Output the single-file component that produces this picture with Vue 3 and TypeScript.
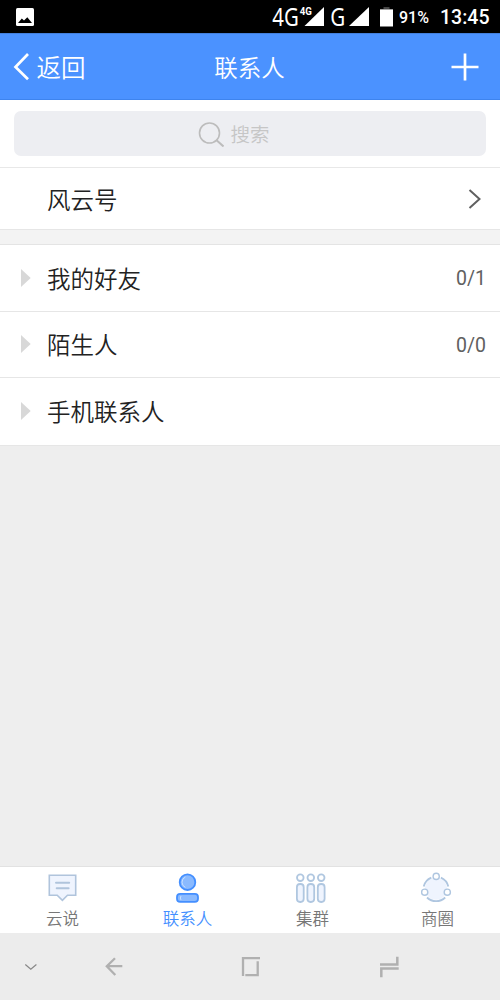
<script setup lang="ts">
interface Group { name: string; count: string; size: string }
interface Tab { id: string; label: string; active?: boolean }

const groups: Group[] = [
  { name: '我的好友', count: '0/1', size: 'mid' },
  { name: '陌生人', count: '0/0', size: 'short' },
  { name: '手机联系人', count: '', size: 'tall' },
]
const tabs: Tab[] = [
  { id: 'chat', label: '云说' },
  { id: 'contacts', label: '联系人', active: true },
  { id: 'cluster', label: '集群' },
  { id: 'circle', label: '商圈' },
]
</script>

<template>
  <div class="phone">
    <div class="status">
      <svg class="photo" width="18" height="18" viewBox="0 0 18 18">
        <rect width="18" height="18" rx="1.5" fill="#fff" />
        <path d="M2 15 L5.8 10.5 L8 12.5 L11.3 9.3 L16 15 Z" fill="#000" />
      </svg>
      <svg class="signals" width="128" height="33" viewBox="270 0 128 33" fill="#fff">
        <text transform="translate(272.3 26) scale(.815 1)" font-size="25" class="net">4G</text>
        <path d="M324 7 V26 H304.5 Z" />
        <text transform="translate(299.7 15) scale(.88 1)" font-size="11" class="net-small">4G</text>
        <text transform="translate(330.3 26) scale(.824 1)" font-size="25" class="net">G</text>
        <path d="M369 7 V26 H349 Z" />
        <path d="M383.5 7 H389.5 V9 H393 V10.5 H380 V9 H383.5 Z" fill="#444" />
        <rect x="380" y="9.5" width="13" height="17" />
      </svg>
      <span class="battery">91%</span>
      <span class="clock">13:45</span>
    </div>

    <header class="header">
      <div class="back">
        <svg width="17" height="30" viewBox="13 52 17 30"><path d="M28 54 L15.5 67 L28 79.3" fill="none" stroke="#fff" stroke-width="2.7" /></svg>
        <span>返回</span>
      </div>
      <h1>联系人</h1>
      <svg class="plus" width="28" height="28" viewBox="0 0 28 28"><path d="M14 .5 V27.5 M.5 14 H27.5" stroke="#fff" stroke-width="2.7" /></svg>
    </header>

    <div class="search-wrap">
      <div class="search">
        <svg width="26" height="26" viewBox="198 120 26 26" fill="none" stroke="#bcbcbc" stroke-width="1.6">
          <circle cx="209.5" cy="132" r="10" /><path d="M216.3 139 L223.5 145.5" stroke-width="2" />
        </svg>
        <span>搜索</span>
      </div>
    </div>

    <div class="row official">
      <span class="name">风云号</span>
      <svg width="14" height="20" viewBox="468 189 14 20"><path d="M469.5 190 L479.5 199 L469.5 208" fill="none" stroke="#606060" stroke-width="2" /></svg>
    </div>
    <div class="band"></div>
    <div v-for="g in groups" :key="g.name" class="row group" :class="g.size">
      <svg class="tri" width="10" height="18" viewBox="0 0 10 18"><path d="M0 0 L9.7 9 L0 18 Z" fill="#d8d8d8" /></svg>
      <span class="name">{{ g.name }}</span>
      <span class="count">{{ g.count }}</span>
    </div>
    <div class="empty"></div>

    <nav class="tabs">
      <div v-for="t in tabs" :key="t.id" class="tab" :class="{ active: t.active }">
        <svg v-if="t.id === 'chat'" width="33" height="32" viewBox="46 872 33 32" fill="#eff4fe" stroke="#b0c4dc" stroke-width="1.6">
          <path d="M49.3 875.2 H75.7 V895.3 H67.5 L62.4 900.4 L57.2 895.3 H49.3 Z" />
          <path d="M56 882.8 H69.2 M56.7 888.3 H68.6" stroke-width="2" stroke-linecap="round" />
        </svg>
        <svg v-else-if="t.id === 'contacts'" width="33" height="32" viewBox="171 872 33 32" fill="#8abaff" stroke="#448fff" stroke-width="1.8">
          <circle cx="187.5" cy="882.2" r="7.8" />
          <rect x="177" y="893.9" width="21" height="8" rx="3.2" />
          <path d="M185.4 877 A5.7 5.7 0 0 0 185.4 887.4 M181 896 Q179.6 898 181 900" fill="none" stroke="#c8e0ff" stroke-width="1" />
        </svg>
        <svg v-else-if="t.id === 'cluster'" width="33" height="32" viewBox="296 872 33 32" fill="#eff4fe" stroke="#b0c7e0" stroke-width="1.8">
          <template v-for="x in [300.3, 310.8, 321.2]" :key="x">
            <circle :cx="x" cy="877.7" r="3.3" fill="#fff" />
            <rect :x="x - 3.4" y="884" width="6.8" height="18" rx="3.2" />
          </template>
        </svg>
        <svg v-else width="33" height="32" viewBox="421 872 33 32" fill="none" stroke="#afc6e0" stroke-width="1.8">
          <circle cx="436" cy="888.8" r="11" fill="#eff4fe" stroke="none" />
          <path d="M423.7 886.5 A13 13 0 0 1 431.3 877.6 M440.9 877.6 A13 13 0 0 1 448.3 886.5 M427 897.5 A13 13 0 0 0 445.2 897.5" />
          <g fill="#fff" stroke-width="1.4"><circle cx="436.2" cy="876.4" r="3.1" /><circle cx="424.7" cy="892.2" r="3.1" /><circle cx="447.3" cy="892.2" r="3.1" /></g>
        </svg>
        <span>{{ t.label }}</span>
      </div>
    </nav>

    <div class="system">
      <svg width="500" height="67" viewBox="0 933 500 67" fill="none" stroke="#b0b0b0" stroke-width="2.3">
        <path d="M25.3 964.5 L30.8 969.3 L36.4 964.5" stroke="#888" stroke-width="1.2" />
        <path d="M122.3 966.2 H107 M115 958.3 L106.8 966.3 L115.3 975" />
        <path d="M260 958.2 H243 V976 M245.3 975.2 H257.7 V961.3" />
        <path d="M397.3 956.8 V964.5 H380 M398.7 968.6 H381.3 V977.2" stroke-width="2.5" />
      </svg>
    </div>
  </div>
</template>

<style>
body { margin: 0; }
</style>

<style scoped>
.phone {
  width: 500px; height: 1000px; overflow: hidden;
  display: flex; flex-direction: column; background: #eee;
  font-family: "Noto Sans CJK SC DemiLight", "Noto Sans CJK SC", sans-serif; font-weight: 350; color: #222;
}
.phone > * { box-sizing: border-box; flex: none; }
svg { display: block; flex: none; }
.status { height: 33px; background: #000; color: #fff; display: flex; align-items: center; padding-left: 16px; font-family: Roboto, sans-serif; }
.signals { margin-left: 236px; }
.net { font-family: "Noto Sans", sans-serif; font-weight: 400; }
.net-small { font-family: Roboto, sans-serif; font-weight: 700; }
.battery { width: 42px; padding: 2px 0 0 1px; box-sizing: border-box; font-size: 16px; font-weight: 500; white-space: nowrap; }
.clock { padding-top: 1px; font-size: 19.5px; font-weight: 500; }
.header { height: 67px; background: #4b92ff; border-bottom: 1px solid #3e84ee; border-top: 1px solid #427fdc; color: #fff; display: grid; grid-template-columns: 1fr auto 1fr; align-items: center; padding: 0 21px 0 13px; }
.back { display: flex; align-items: center; gap: 6.5px; font-size: 24.5px; line-height: 36px; }
h1 { font-size: 23.5px; font-weight: inherit; line-height: 36px; margin: 0 0 0 7px; }
.plus { justify-self: end; }
.search-wrap { height: 68px; padding: 11px 14px; background: #fff; border-bottom: 1px solid #e8e8e8; }
.search { height: 45px; border-radius: 7px; background: #edeef2; display: flex; align-items: center; justify-content: center; gap: 6px; color: #c6c6c6; font-size: 19.5px; padding-right: 32px; }
.row { background: #fff; display: flex; align-items: center; border-bottom: 1px solid #e6e6e6; padding-right: 14px; }
.name { font-size: 23.5px; line-height: 36px; flex: 1; }
.official { height: 62px; padding: 0 18px 0 47px; }
.band { height: 15px; background: #f3f3f3; border-bottom: 1px solid #e4e4e4; }
.group { padding-left: 21px; padding-bottom: 1px; }
.mid { height: 67px; }
.short { height: 66px; }
.tall { height: 68px; }
.tri { margin-right: 16px; }
.count { font-family: Roboto, sans-serif; font-weight: 400; font-size: 19.5px; color: #606060; padding-top: 2px; }
.empty { flex: 1; background: #eee; }
.tabs { height: 67px; background: #fff; border-top: 1px solid #e2e2e2; display: grid; grid-template-columns: repeat(4, 1fr); }
.tab { display: flex; flex-direction: column; align-items: center; padding-top: 5px; color: #777; font-size: 16.5px; line-height: 28px; }
.active { color: #448fff; }
.system { height: 67px; background: #ececec; }
</style>
